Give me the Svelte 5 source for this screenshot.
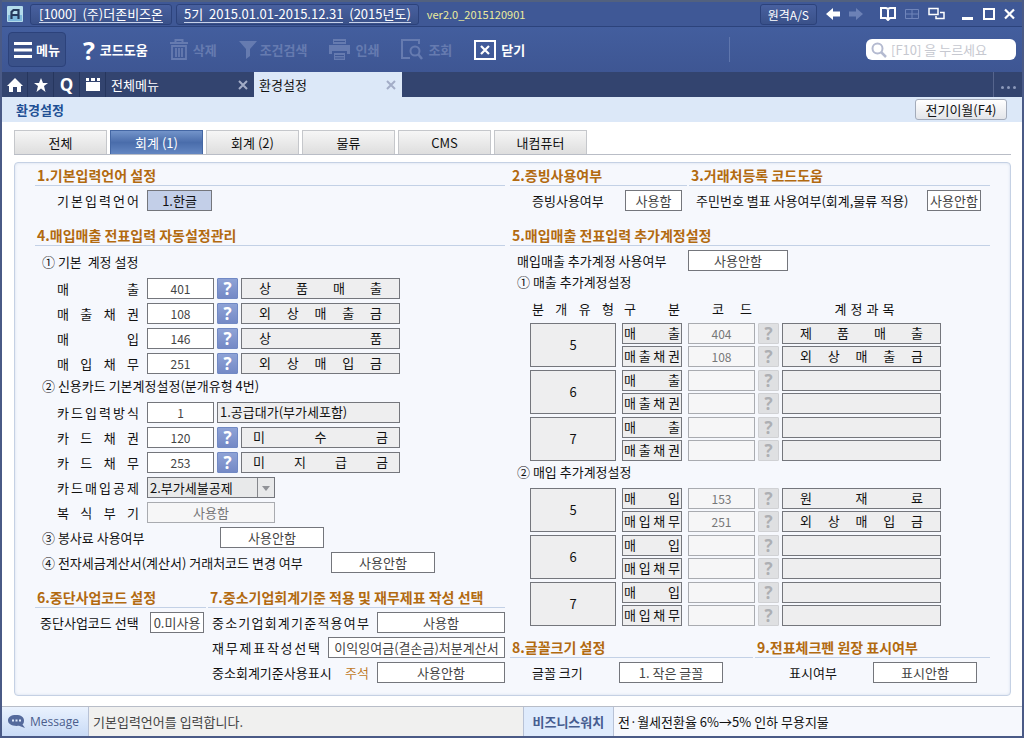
<script>
  const pageTabs = ['전체', '회계 (1)', '회계 (2)', '물류', 'CMS', '내컴퓨터']
  let activeTab = $state('회계 (1)')
  let cardDeduction = $state('2.부가세불공제')

  const basicAccounts = [
    { id: 'sales', label: '매출', code: '401', name: '상품매출' },
    { id: 'receivable', label: '매출채권', code: '108', name: '외상매출금' },
    { id: 'purchase', label: '매입', code: '146', name: '상품' },
    { id: 'payable', label: '매입채무', code: '251', name: '외상매입금' }
  ]

  const cardAccounts = [
    { id: 'card-receivable', label: '카드채권', code: '120', name: '미수금' },
    { id: 'card-payable', label: '카드채무', code: '253', name: '미지급금' }
  ]

  const salesExtra = [
    { type: 5, rows: [['매출', '404', '제품매출'], ['매출채권', '108', '외상매출금']] },
    { type: 6, rows: [['매출', '', ''], ['매출채권', '', '']] },
    { type: 7, rows: [['매출', '', ''], ['매출채권', '', '']] }
  ]

  const purchaseExtra = [
    { type: 5, rows: [['매입', '153', '원재료'], ['매입채무', '251', '외상매입금']] },
    { type: 6, rows: [['매입', '', ''], ['매입채무', '', '']] },
    { type: 7, rows: [['매입', '', ''], ['매입채무', '', '']] }
  ]
</script>

{#snippet spread(text)}
  {#each text as ch}<span>{ch}</span>{/each}
{/snippet}

{#snippet accountRow(item, wide)}
  <div class="row indent">
    <label class="spread name" for={item.id}>{@render spread(item.label)}</label>
    <input class="w-code" id={item.id} value={item.code} />
    <button class="help" aria-label="코드도움">?</button>
    <output class="box spread account" class:wide for={item.id}>{@render spread(item.name)}</output>
  </div>
{/snippet}

{#snippet extraTable(groups, head)}
  <table>
    <colgroup>
      <col class="c-type" /><col class="c-kind" /><col class="c-code" /><col class="c-help" /><col />
    </colgroup>
    {#if head}
      <thead>
        <tr>
          <th><div class="spread th-type">{@render spread('분개유형')}</div></th>
          <th><div class="spread th-type">{@render spread('구분')}</div></th>
          <th colspan="2"><div class="spread th-code">{@render spread('코드')}</div></th>
          <th><div class="spread th-name">{@render spread('계정과목')}</div></th>
        </tr>
      </thead>
    {/if}
    {#each groups as group}
      <tbody>
        {#each group.rows as [kind, code, name], i}
          <tr>
            {#if i === 0}
              <td rowspan="2"><div class="box type">{group.type}</div></td>
            {/if}
            <td><div class="box spread kind">{@render spread(kind)}</div></td>
            <td><input class="w-full" value={code} aria-label={`${group.type} ${kind} 코드`} disabled /></td>
            <td><button class="help" aria-label="코드도움" disabled>?</button></td>
            <td><div class="box spread account">{@render spread(name)}</div></td>
          </tr>
        {/each}
      </tbody>
    {/each}
  </table>
{/snippet}

<div class="window">
  <header class="titlebar">
    <svg class="logo" width="16" height="16" viewBox="0 0 16 16">
      <rect width="16" height="16" rx="1" fill="#b4dcec" />
      <rect x="1" y="9" width="14" height="6" fill="#7fb9dc" />
      <path d="M4.5 13V6l2-2h5v9M5 9h6" fill="none" stroke="#263a5c" stroke-width="2.2" />
    </svg>
    <button class="chip company-name"><span>[1000]&nbsp; (주)더존비즈온</span></button>
    <button class="chip"><span>5기&nbsp; 2015.01.01-2015.12.31</span>&nbsp; <span>(2015년도)</span></button>
    <span class="version">ver2.0_2015120901</span>
    <div class="title-tools">
      <button class="chip remote">원격A/S</button>
      <button class="icon" aria-label="이전">
        <svg width="14" height="12" viewBox="0 0 14 12"><path d="M0 6l7-6v3.5h7v5H7V12z" fill="#fff" /></svg>
      </button>
      <button class="icon" aria-label="다음">
        <svg width="14" height="12" viewBox="0 0 14 12"><path d="M14 6L7 0v3.5H0v5h7V12z" fill="#6c81b6" /></svg>
      </button>
      <button class="icon apart" aria-label="도움말">
        <svg width="16" height="14" viewBox="0 0 16 14"><path d="M1 1h5l2 1 2-1h5v10h-5l-2 2-2-2H1zM8 2v11" fill="none" stroke="#fff" stroke-width="2" /></svg>
      </button>
      <button class="icon" aria-label="분할">
        <svg width="14" height="12" viewBox="0 0 14 12"><path d="M.5 1.5h13v9H.5zM7 1.5v9M.5 6h13" fill="none" stroke="#7085ba" /></svg>
      </button>
      <button class="icon" aria-label="창 전환">
        <svg width="17" height="14" viewBox="0 0 17 14"><path d="M1 1.5h9v6H1zM12 5.5h4v6H8V9" fill="none" stroke="#fff" stroke-width="1.5" /></svg>
      </button>
      <button class="icon apart" aria-label="최소화">
        <svg width="12" height="12" viewBox="0 0 12 12"><path d="M0 9h11v3H0z" fill="#fff" /></svg>
      </button>
      <button class="icon" aria-label="최대화">
        <svg width="12" height="12" viewBox="0 0 12 12"><path d="M1 1h10v10H1z" fill="none" stroke="#fff" stroke-width="2" /></svg>
      </button>
      <button class="icon" aria-label="창 닫기">
        <svg width="11" height="12" viewBox="0 0 11 12"><path d="M1 1.5l9 9M10 1.5l-9 9" stroke="#fff" stroke-width="2.2" /></svg>
      </button>
    </div>
  </header>

  <div class="toolbar">
    <button class="tool menu">
      <svg width="18" height="16" viewBox="0 0 18 16"><path d="M0 1.5h18M0 8h18M0 14.5h18" stroke="#fff" stroke-width="3" /></svg>
      메뉴
    </button>
    <button class="tool"><b class="question">?</b>코드도움</button>
    <button class="tool" disabled>
      <svg width="18" height="21" viewBox="0 0 18 21">
        <path d="M0 4h18M5.5 4V1h7v3" fill="none" stroke="currentColor" stroke-width="2" />
        <path d="M2 7h14v13H2zM6 9v9M9 9v9M12 9v9" fill="none" stroke="currentColor" stroke-width="1.8" />
      </svg>
      삭제
    </button>
    <button class="tool tight" disabled>
      <svg width="18" height="18" viewBox="0 0 18 18"><path d="M0 0h18l-7 8v7l-4 3V8z" fill="currentColor" /></svg>
      조건검색
    </button>
    <button class="tool" disabled>
      <svg width="21" height="21" viewBox="0 0 21 21">
        <path d="M4 0h13v5H4zM0 6h21v9h-3v-3H3v3H0zM5 14h11v7H5z" fill="currentColor" />
        <path d="M6 16.5h9M6 19h9M5 2.5h11" stroke="#3f5895" />
      </svg>
      인쇄
    </button>
    <button class="tool" disabled>
      <svg width="22" height="21" viewBox="0 0 22 21">
        <path d="M18 5V1H1v18h8" fill="none" stroke="currentColor" stroke-width="2" />
        <circle cx="14" cy="12" r="4.5" fill="none" stroke="currentColor" stroke-width="2" />
        <path d="M17 15l4 5" stroke="currentColor" stroke-width="2.5" />
      </svg>
      조회
    </button>
    <button class="tool">
      <svg width="22" height="20" viewBox="0 0 22 20">
        <path d="M1 1h20v18H1z" fill="none" stroke="#fff" stroke-width="2" />
        <path d="M7 6l8 8M15 6l-8 8" stroke="#fff" stroke-width="2.2" />
      </svg>
      닫기
    </button>
    <i class="divider"></i>
    <label class="search">
      <svg width="16" height="16" viewBox="0 0 16 16"><circle cx="6.5" cy="6.5" r="5" fill="none" stroke="#b4bad0" stroke-width="2" /><path d="M10 10l5 5" stroke="#b4bad0" stroke-width="2.5" /></svg>
      <input type="search" placeholder="[F10] 을 누르세요" aria-label="검색" />
    </label>
  </div>

  <nav class="docbar">
    <button class="doc-icon" aria-label="홈">
      <svg width="16" height="14" viewBox="0 0 16 14"><path d="M8 0l8 8h-2v6h-4V9H6v5H2V8H0z" fill="#fff" /></svg>
    </button>
    <button class="doc-icon" aria-label="즐겨찾기">
      <svg width="14" height="14" viewBox="0 0 14 14"><path d="M7 0l2 5h5l-4 3 1.500 6L7 10.500 2.500 14 4 8 0 5h5z" fill="#fff" /></svg>
    </button>
    <button class="doc-icon" aria-label="검색"><b>Q</b></button>
    <button class="doc-icon" aria-label="일정">
      <svg width="16" height="13" viewBox="0 0 16 13"><path d="M1 0h3v3H1zM6 0h4v3H6zM12 0h3v3h-3zM1 4h14v9H1z" fill="#fff" /></svg>
    </button>
    <div class="doc">
      <a href="#menu">전체메뉴</a>
      <button class="close" aria-label="전체메뉴 닫기"><svg width="10" height="10" viewBox="0 0 10 10"><path d="M1 1l8 8M9 1L1 9" stroke="currentColor" stroke-width="2" /></svg></button>
    </div>
    <div class="doc current">
      <a href="#settings">환경설정</a>
      <button class="close" aria-label="환경설정 닫기"><svg width="10" height="10" viewBox="0 0 10 10"><path d="M1 1l8 8M9 1L1 9" stroke="currentColor" stroke-width="2" /></svg></button>
    </div>
    <button class="doc-more" aria-label="더보기"><i></i><i></i><i></i></button>
  </nav>

  <div class="band">
    <h1>환경설정</h1>
    <button class="carry">전기이월(F4)</button>
  </div>

  <main>
    <div class="tabs">
      {#each pageTabs as tab}
        <button class:active={tab === activeTab} onclick={() => (activeTab = tab)}>{tab}</button>
      {/each}
    </div>

    <div class="panel">
      <div class="col">
        <section>
          <h2>1.기본입력언어 설정</h2>
          <div class="row indent">
            <label class="spread name" for="lang">{@render spread('기본입력언어')}</label>
            <input class="w-lang" id="lang" value="1.한글" />
          </div>
        </section>

        <section>
          <h2>4.매입매출 전표입력 자동설정관리</h2>
          <h3 class="first">① 기본&nbsp; 계정 설정</h3>
          {#each basicAccounts as item}
            {@render accountRow(item, false)}
          {/each}
          <h3>② 신용카드 기본계정설정(분개유형 4번)</h3>
          <div class="row indent">
            <label class="spread name" for="card-mode">{@render spread('카드입력방식')}</label>
            <input class="w-code" id="card-mode" value="1" />
            <output class="box mode" for="card-mode">1.공급대가(부가세포함)</output>
          </div>
          {#each cardAccounts as item}
            {@render accountRow(item, true)}
          {/each}
          <div class="row indent">
            <label class="spread name" for="card-deduction">{@render spread('카드매입공제')}</label>
            <span class="select">
              <select id="card-deduction" bind:value={cardDeduction}>
                <option>2.부가세불공제</option>
              </select>
            </span>
          </div>
          <div class="row indent">
            <label class="spread name" for="double-entry">{@render spread('복식부기')}</label>
            <input class="w-wide" id="double-entry" value="사용함" disabled />
          </div>
          <div class="row sub">
            <label class="service" for="service">③ 봉사료 사용여부</label>
            <input class="w-mid" id="service" value="사용안함" />
          </div>
          <div class="row sub">
            <label class="invoice" for="invoice">④ 전자세금계산서(계산서) 거래처코드 변경 여부</label>
            <input class="w-mid" id="invoice" value="사용안함" />
          </div>
        </section>

        <div class="pair company">
          <section>
            <h2>6.중단사업코드 설정</h2>
            <div class="row between closed">
              <label for="closed-code">중단사업코드 선택</label>
              <input class="w-small" id="closed-code" value="0.미사용" />
            </div>
          </section>
          <section>
            <h2>7.중소기업회계기준 적용 및 재무제표 작성 선택</h2>
            <div class="row sme">
              <label class="spread" for="sme">{@render spread('중소기업회계기준적용여부')}</label>
              <input class="w-wide" id="sme" value="사용함" />
            </div>
            <div class="row sme">
              <label class="spread" for="statement">{@render spread('재무제표작성선택')}</label>
              <input class="w-long" id="statement" value="이익잉여금(결손금)처분계산서" />
            </div>
            <div class="row sme">
              <label for="sme-mark">중소회계기준사용표시</label>
              <span class="note">주석</span>
              <input class="w-wide" id="sme-mark" value="사용안함" />
            </div>
          </section>
        </div>
      </div>

      <div class="col">
        <div class="pair evidence">
          <section>
            <h2>2.증빙사용여부</h2>
            <div class="row between proof">
              <label for="proof">증빙사용여부</label>
              <input class="w-proof" id="proof" value="사용함" />
            </div>
          </section>
          <section>
            <h2>3.거래처등록 코드도움</h2>
            <div class="row between client">
              <label for="client">주민번호 별표 사용여부(회계,물류 적용)</label>
              <input class="w-small" id="client" value="사용안함" />
            </div>
          </section>
        </div>

        <section class="extra">
          <h2>5.매입매출 전표입력 추가계정설정</h2>
          <div class="row sub">
            <label class="extra-use" for="extra-use">매입매출 추가계정 사용여부</label>
            <input class="w-extra" id="extra-use" value="사용안함" />
          </div>
          <h3 class="sales">① 매출 추가계정설정</h3>
          {@render extraTable(salesExtra, true)}
          <h3 class="purchases">② 매입 추가계정설정</h3>
          {@render extraTable(purchaseExtra, false)}
        </section>

        <div class="pair display">
          <section>
            <h2>8.글꼴크기 설정</h2>
            <div class="row between font-size">
              <label for="font-size">글꼴 크기</label>
              <input class="w-mid" id="font-size" value="1. 작은 글꼴" />
            </div>
          </section>
          <section>
            <h2>9.전표체크펜 원장 표시여부</h2>
            <div class="row between marker">
              <label for="marker">표시여부</label>
              <input class="w-mid" id="marker" value="표시안함" />
            </div>
          </section>
        </div>
      </div>
    </div>
  </main>

  <footer>
    <div class="message">
      <svg width="18" height="13" viewBox="0 0 18 13">
        <path d="M8 0c5 0 8 2 8 5.500 0 2-.5 3-1.500 4L17 13l-6-2.200C4 11.500 0 9 0 5.500S3 0 8 0z" fill="#556a9c" />
        <path d="M4 5.500h2M7.500 5.500h2M11 5.500h2" stroke="#dfe9fa" stroke-width="2" />
      </svg>
      Message
    </div>
    <p class="hint">기본입력언어를 입력합니다.</p>
    <strong>비즈니스워치</strong>
    <a class="news" href="#news">전·월세전환율 6%→5% 인하 무용지물</a>
  </footer>
</div>

<style>
  :global(body) {
    background: #fff;
    color: #111;
    font: 13px/16px "Noto Sans CJK KR", sans-serif;
  }
  button, input, select {
    box-sizing: border-box;
    margin: 0;
    padding: 0;
    font: inherit;
    color: inherit;
    border-radius: 0;
  }
  button {
    border: 0;
    background: none;
    cursor: pointer;
  }
  a {
    color: inherit;
    text-decoration: none;
  }
  svg {
    display: block;
    flex: none;
  }
  .window {
    box-sizing: border-box;
    display: flex;
    flex-direction: column;
    min-height: 100vh;
    border: solid #4a5a86;
    border-width: 0 2px 2px;
  }

  /* title bar */
  .titlebar {
    box-sizing: border-box;
    display: flex;
    align-items: center;
    gap: 4px;
    height: 27px;
    padding: 0 7px 0 5px;
    border-top: 2px solid #52617f;
    border-bottom: 1px solid #2c437c;
    background: #3f5896;
    color: #fff;
    white-space: nowrap;
  }
  .logo {
    margin-right: 3px;
  }
  .chip {
    height: 21px;
    padding: 0 7px;
    border: 1px solid #2c427b;
    border-radius: 3px;
    background: linear-gradient(#48609f, #3a5189);
    line-height: 17px;
  }
  .chip span {
    display: inline-block;
    border-bottom: 1px solid #c8d2ea;
    line-height: 16px;
  }
  .company-name {
    padding: 0 8px;
  }
  .remote {
    font-size: 12px;
  }
  .version {
    margin-left: 4px;
    color: #ecec9c;
    font-size: 11px;
  }
  .title-tools {
    display: flex;
    align-items: center;
    gap: 9px;
    margin-left: auto;
  }
  .icon.apart {
    margin-left: 8px;
  }

  /* toolbar */
  .toolbar {
    display: flex;
    align-items: center;
    gap: 22px;
    height: 45px;
    padding: 0 6px;
    background: linear-gradient(#435e9e, #3e5693);
    color: #fff;
  }
  .tool {
    display: flex;
    align-items: center;
    gap: 5px;
    font-weight: bold;
    white-space: nowrap;
  }
  .tool.tight {
    gap: 3px;
  }
  .tool:disabled {
    color: #667bb0;
    cursor: default;
  }
  .menu {
    gap: 4px;
    height: 35px;
    margin-right: -5px;
    padding: 0 5px;
    border: 1px solid #2c427b;
    border-radius: 4px;
    background: #3a5189;
  }
  .question {
    font: bold 25px/24px "Open Sans", sans-serif;
  }
  .divider {
    width: 1px;
    height: 25px;
    margin-left: auto;
    margin-right: 114px;
    background: #5f76ad;
  }
  .search {
    box-sizing: border-box;
    display: flex;
    align-items: center;
    gap: 4px;
    width: 150px;
    height: 21px;
    padding: 0 5px;
    border-radius: 6px;
    background: #fff;
  }
  .search input {
    flex: 1;
    min-width: 0;
    border: 0;
    outline: 0;
    background: none;
    color: #333;
    text-align: left;
  }
  .search input::placeholder {
    color: #c6c8d0;
  }

  /* open documents */
  .docbar {
    display: flex;
    height: 25px;
    background: #33446f;
    color: #fff;
  }
  .doc-icon {
    box-sizing: border-box;
    display: flex;
    align-items: center;
    justify-content: center;
    width: 26px;
    border-right: 1px solid #26365e;
  }
  .doc-icon b {
    font: bold 17px/20px "Open Sans", sans-serif;
  }
  .doc {
    box-sizing: border-box;
    display: flex;
    align-items: center;
    justify-content: space-between;
    width: 148px;
    padding: 0 6px 0 5px;
  }
  .close {
    color: #a3adc7;
  }
  .current {
    background: #dce8f8;
    color: #111;
  }
  .doc-more {
    display: flex;
    align-items: center;
    justify-content: center;
    gap: 3px;
    width: 29px;
    margin-left: auto;
    border-left: 1px solid #56658d;
  }
  .doc-more i {
    width: 3px;
    height: 3px;
    margin-top: 6px;
    border-radius: 50%;
    background: #8c99ba;
  }
  .band {
    display: flex;
    align-items: center;
    justify-content: space-between;
    height: 25px;
    padding: 0 15px 0 14px;
    background: #dce8f8;
  }
  h1 {
    margin: 0;
    color: #204f94;
    font-size: 13px;
  }
  .carry {
    width: 92px;
    height: 21px;
    border: 1px solid #a3abba;
    border-radius: 3px;
    background: linear-gradient(#fff, #e3e5ea);
    line-height: 17px;
  }

  /* page tabs */
  main {
    flex: 1;
    padding: 8px 11px 10px 12px;
  }
  .tabs {
    display: flex;
    gap: 3px;
    margin-bottom: 7px;
    border-bottom: 1px solid #b9bdc6;
  }
  .tabs button {
    width: 93px;
    height: 24px;
    border: 1px solid #c5c7cb;
    border-bottom: 0;
    background: linear-gradient(#f6f6f6, #dedede);
    line-height: 20px;
  }
  .tabs .active {
    border-color: #4467a4;
    background: linear-gradient(#7394ca, #4a6dab 50%, #6487c2);
    color: #fff;
  }

  /* settings */
  .panel {
    display: grid;
    grid-template-columns: 470fr 480fr;
    gap: 5px;
    padding: 2px 20px 12px;
    border: 1px solid #c5d1e4;
    border-radius: 4px;
    background: #f6f8fd;
    box-shadow: inset 0 0 3px #d5deec;
  }
  .col {
    display: flex;
    flex-direction: column;
    gap: 14px;
    min-width: 0;
  }
  section {
    display: flex;
    flex-direction: column;
    gap: 4px;
    min-width: 0;
  }
  h2 {
    margin: 0;
    padding-left: 2px;
    border-bottom: 1px solid #c3d1e6;
    color: #b26a10;
    font-size: 14px;
    line-height: 20px;
    white-space: nowrap;
  }
  h3 {
    height: 20px;
    margin: 0;
    padding-left: 7px;
    font-size: 13px;
    font-weight: normal;
    white-space: nowrap;
  }
  h3.first {
    margin-top: 4px;
  }
  .pair {
    display: grid;
    gap: 2px;
  }
  .company {
    grid-template-columns: 171fr 297fr;
  }
  .evidence {
    grid-template-columns: 177fr 301fr;
  }
  .display {
    grid-template-columns: 243fr 235fr;
    margin-top: -6px;
  }
  .row {
    display: flex;
    align-items: center;
    height: 21px;
    white-space: nowrap;
  }
  .indent {
    gap: 3px;
    padding-left: 22px;
  }
  .sub {
    padding-left: 7px;
  }
  .between {
    justify-content: space-between;
  }
  .closed {
    padding: 0 2px 0 5px;
  }
  .proof {
    padding: 0 5px 0 22px;
  }
  .client {
    padding: 0 9px 0 7px;
  }
  .font-size {
    padding: 0 30px 0 22px;
  }
  .marker {
    padding: 0 13px 0 34px;
  }
  .spread {
    display: flex;
    justify-content: space-between;
  }
  .name {
    width: 82px;
    margin-right: 5px;
  }
  .sme {
    gap: 8px;
    padding-left: 4px;
  }
  .sme label {
    flex: 1;
  }
  .note {
    color: #c07a28;
  }
  .service {
    width: 178px;
  }
  .invoice {
    width: 289px;
  }
  .extra-use {
    width: 171px;
  }
  input {
    height: 21px;
    border: 1px solid #74767c;
    background: #fff;
    color: #444;
    text-align: center;
  }
  input:disabled {
    border-color: #a9abb0;
    background: #f6f6f7;
    color: #777;
  }
  .w-code {
    width: 67px;
  }
  .w-lang {
    width: 65px;
    background: #c3cfe8;
    color: #111;
  }
  .w-small {
    width: 54px;
  }
  .w-proof {
    width: 57px;
  }
  .w-extra {
    width: 100px;
  }
  .w-mid {
    width: 104px;
  }
  .w-wide {
    width: 128px;
  }
  .w-long {
    width: 177px;
  }
  .w-full {
    display: block;
    width: 100%;
  }
  .w-code, .w-full {
    font-size: 12px;
  }
  .help {
    display: block;
    width: 21px;
    height: 21px;
    border: 1px solid #7189c4;
    border-radius: 1px;
    background: linear-gradient(#8fa3d6, #7489c6);
    color: #fff;
    font: bold 17px/18px "Open Sans", sans-serif;
  }
  .help:disabled {
    border-color: #d0d1d4;
    background: #dfe0e2;
    color: #adafb3;
  }
  .box {
    box-sizing: border-box;
    height: 21px;
    border: 1px solid #74767c;
    background: #eeeeef;
    line-height: 18px;
  }
  .account {
    padding: 0 17px;
  }
  .indent .account {
    width: 159px;
  }
  .indent .wide {
    padding: 0 11px;
  }
  .mode {
    width: 183px;
    padding-left: 2px;
  }
  .select {
    position: relative;
    width: 128px;
    height: 21px;
  }
  .select::after {
    content: "";
    position: absolute;
    right: 5px;
    top: 9px;
    border: solid transparent;
    border-width: 5px 4px 0;
    border-top-color: #909297;
    pointer-events: none;
  }
  select {
    appearance: none;
    width: 100%;
    height: 21px;
    padding-left: 2px;
    border: 1px solid #74767c;
    background: linear-gradient(#85878c, #85878c) right 16px top 0 / 1px 100% no-repeat #e8e9ea;
    line-height: 18px;
  }

  .extra {
    gap: 0;
  }
  .extra .row {
    margin-top: 4px;
  }
  .extra .sales {
    margin-top: 3px;
  }
  .purchases + table {
    margin-top: 4px;
  }
  table {
    width: calc(100% - 63px);
    margin: 0 43px 0 20px;
    border-spacing: 0;
    table-layout: fixed;
  }
  .c-type {
    width: 92px;
  }
  .c-kind {
    width: 66px;
  }
  .c-code {
    width: 70px;
  }
  .c-help {
    width: 24px;
  }
  th {
    height: 29px;
    padding: 0;
    font-weight: normal;
  }
  .th-type {
    margin: 0 8px 0 2px;
  }
  .th-code {
    margin: 0 30px 0 24px;
  }
  .th-name {
    width: 60px;
    margin: 0 auto;
  }
  td {
    padding: 0 6px 2px 0;
    vertical-align: top;
  }
  tr:last-child td, td[rowspan] {
    padding-bottom: 3px;
  }
  td:nth-last-child(3), td:nth-last-child(2) {
    padding-right: 3px;
  }
  .type {
    height: 44px;
    line-height: 42px;
    text-align: center;
  }
  .kind {
    padding: 0 1px;
  }

  /* status bar */
  footer {
    display: flex;
    align-items: center;
    height: 29px;
    border-top: 1px solid #b8bdc8;
    background: #f0f0ef;
    line-height: 29px;
    white-space: nowrap;
  }
  .message {
    display: flex;
    align-items: center;
    gap: 4px;
    box-sizing: border-box;
    width: 87px;
    padding-left: 6px;
    border-right: 1px solid #b8c2d6;
    background: linear-gradient(#eaf2fe, #c9dbf6);
    color: #4a5d8c;
    font: 12px/29px "Open Sans", sans-serif;
  }
  .hint {
    flex: 434;
    margin: 0;
    padding-left: 4px;
    color: #444;
  }
  footer strong {
    box-sizing: border-box;
    width: 91px;
    border: solid #b8c2d6;
    border-width: 0 1px;
    background: #dfebfc;
    color: #465d90;
    text-align: center;
  }
  .news {
    flex: 408;
    padding-left: 4px;
    background: #f6f8fd;
  }
</style>
